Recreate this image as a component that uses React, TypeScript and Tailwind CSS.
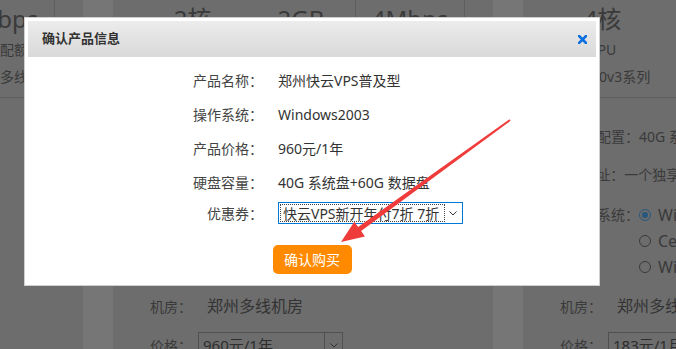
import React from 'react';

type Spec = { big: string; label: string; sub: string };

interface Plan {
  specs: Spec[];
  room: string;
  price: string;
}

const plans: Plan[] = [
  {
    specs: [
      { big: '1核', label: 'CPU', sub: 'E5-2680v3系列' },
      { big: '1GB', label: '内存', sub: 'DDR4 ECC' },
      { big: '2Mbps', label: '带宽配额', sub: '郑州多线' },
    ],
    room: '郑州多线机房',
    price: '480元/1年',
  },
  {
    specs: [
      { big: '2核', label: 'CPU', sub: 'E5-2680v3系列' },
      { big: '2GB', label: '内存', sub: 'DDR4 ECC' },
      { big: '4Mbps', label: '带宽配额', sub: '郑州多线' },
    ],
    room: '郑州多线机房',
    price: '960元/1年',
  },
  {
    specs: [
      { big: '4核', label: 'CPU', sub: 'E5-2680v3系列' },
      { big: '4GB', label: '内存', sub: 'DDR4 ECC' },
      { big: '6Mbps', label: '带宽配额', sub: '郑州多线' },
    ],
    room: '郑州多线机房',
    price: '183元/1月',
  },
];

const Radio = ({ checked, label }: { checked?: boolean; label: string }) => (
  <div className="flex h-[26px] items-center gap-[7px]">
    <span
      className={
        checked
          ? 'flex h-[12px] w-[12px] items-center justify-center rounded-full border border-[#27577c]'
          : 'flex h-[12px] w-[12px] items-center justify-center rounded-full border border-[#3a3a3a]'
      }
    >
      {checked && <span className="h-[6px] w-[6px] rounded-full bg-[#27577c]" />}
    </span>
    <span className="whitespace-nowrap text-[16px]">{label}</span>
  </div>
);

const PlanCard = ({ plan }: { plan: Plan }) => (
  <div className="h-[349px] w-[380px] shrink-0 bg-[#6d6d6d] text-[14px] text-[#3a3a3a]">
    <div className="flex h-[98px] border-b border-[#5e5e5e] pl-[25px]">
      {plan.specs.map((s, i) => (
        <div
          key={i}
          className={
            i === 0
              ? 'flex h-[90px] w-[109px] flex-col items-center'
              : 'flex h-[90px] w-[109px] flex-col items-center border-r border-[#5e5e5e]'
          }
        >
          <div className="h-[38px] whitespace-nowrap text-[24px] leading-[38px]">{s.big}</div>
          <div className="h-[24px] whitespace-nowrap leading-[24px]">{s.label}</div>
          <div className="h-[30px] whitespace-nowrap leading-[30px]">{s.sub}</div>
        </div>
      ))}
    </div>

    <div className="pl-[46px] pt-[20px]">
      <div className="h-[38px] whitespace-nowrap leading-[38px]">硬盘配置：40G 系统盘+60G 数据盘</div>
      <div className="h-[38px] whitespace-nowrap leading-[38px]">IP地址：一个独享IP</div>
      <div className="mt-[8px] flex">
        <span className="h-[26px] whitespace-nowrap leading-[26px]">操作系统：</span>
        <div className="flex flex-col">
          <Radio checked label="Windows2003" />
          <Radio label="CentOS 6.5" />
          <Radio label="Windows2008" />
        </div>
      </div>
    </div>

    <div className="pl-[37px]">
      <div className="mt-[12px] flex h-[28px] items-center">
        <span className="w-[57px] whitespace-nowrap">机房：</span>
        <span className="whitespace-nowrap text-[16px] text-[#333]">{plan.room}</span>
      </div>
      <div className="mt-[12px] flex h-[26px] items-center">
        <span className="w-[48px] whitespace-nowrap">价格：</span>
        <div className="flex h-[26px] w-[145px] items-center border border-[#505050]">
          <span className="flex-1 whitespace-nowrap pl-[4px] text-[15px] text-[#2e2e2e]">{plan.price}</span>
          <span className="flex h-full w-[18px] items-center justify-center border-l border-[#505050]">
            <svg width="8" height="5" viewBox="0 0 8 5">
              <path d="M0.5 0.5 L4 4 L7.5 0.5" fill="none" stroke="#333" strokeWidth="1" />
            </svg>
          </span>
        </div>
      </div>
    </div>
  </div>
);

const rows = [
  { label: '产品名称：', value: '郑州快云VPS普及型' },
  { label: '操作系统：', value: 'Windows2003' },
  { label: '产品价格：', value: '960元/1年' },
  { label: '硬盘容量：', value: '40G 系统盘+60G 数据盘' },
];

const ConfirmDialog = () => (
  <div className="absolute left-[24px] top-[17px] flex h-[269px] w-[576px] flex-col border border-[#cfcfcf] bg-white p-[3px]">
    <div className="flex h-[36px] shrink-0 items-center justify-between bg-linear-to-b from-[#ececec] to-[#d9d9d9] pl-[14px] pr-[9px]">
      <span className="text-[13px] font-bold text-[#333]">确认产品信息</span>
      <svg width="9" height="9" viewBox="0 0 9 9">
        <path d="M1 1 L8 8 M8 1 L1 8" stroke="#0a6fe0" strokeWidth="2.6" strokeLinecap="square" />
      </svg>
    </div>

    <div className="grid grid-cols-[235px_1fr] gap-x-[15px] pt-[6px] text-[14px]">
      {rows.map((r) => (
        <React.Fragment key={r.label}>
          <div className="flex h-[34px] items-center justify-end text-[#444]">{r.label}</div>
          <div className="flex h-[34px] items-center text-[#333]">{r.value}</div>
        </React.Fragment>
      ))}
      <div className="flex h-[28px] items-center justify-end text-[#444]">优惠券：</div>
      <div className="flex h-[28px] items-center">
        <div className="flex h-[22px] w-[185px] items-center border border-[#0078d7] bg-white p-[1px]">
          <div className="h-full flex-1 overflow-hidden whitespace-nowrap border border-dotted border-[#444] pl-[2px] leading-[17px] text-[#333]">
            快云VPS新开年付7折 7折
          </div>
          <span className="flex h-full w-[16px] items-center justify-center">
            <svg width="8" height="5" viewBox="0 0 8 5">
              <path d="M0.5 0.5 L4 4 L7.5 0.5" fill="none" stroke="#333" strokeWidth="1" />
            </svg>
          </span>
        </div>
      </div>
    </div>

    <button className="mx-auto mt-[18px] flex h-[29px] w-[79px] items-center justify-center rounded-[5px] bg-[#ff8a00] text-[14px] text-white">
      确认购买
    </button>
  </div>
);

export default function App() {
  return (
    <div className="relative h-[349px] w-[676px] overflow-hidden bg-[#767676] font-['Noto_Sans','Noto_Sans_CJK_SC',sans-serif]">
      <div className="ml-[-297px] flex gap-[30px]">
        {plans.map((p, i) => (
          <PlanCard key={i} plan={p} />
        ))}
      </div>

      <ConfirmDialog />

      <svg className="pointer-events-none absolute left-0 top-0" width="676" height="349" viewBox="0 0 676 349">
        <polygon
          points="510.5,120.8 361.1,231.1 364.9,236.4 341,242 354.3,221.8 358.1,227.1 509.5,119.2"
          fill="#f03b3b"
        />
      </svg>
    </div>
  );
}
